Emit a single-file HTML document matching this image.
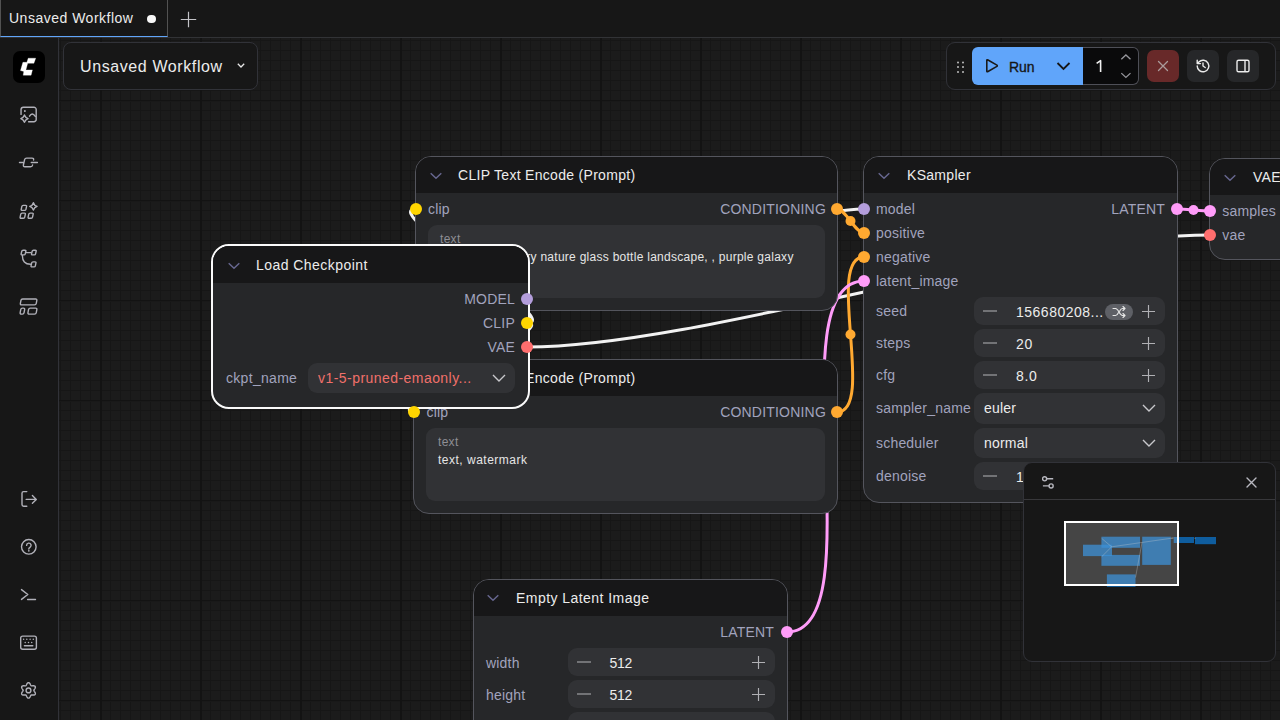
<!DOCTYPE html>
<html><head><meta charset="utf-8">
<style>
*{box-sizing:border-box;margin:0;padding:0}
html,body{width:1280px;height:720px;overflow:hidden}
body{position:relative;background:#1b1b1b;font-family:"Liberation Sans",sans-serif;color:#e6e6e6}
.abs{position:absolute}
#grid{position:absolute;left:0;top:0;width:1280px;height:720px;
background-image:
 linear-gradient(to right,#131313 2px,transparent 2px),
 linear-gradient(to bottom,#131313 1px,#191919 1px,#191919 2px,transparent 2px),
 linear-gradient(to right,#161616 1px,transparent 1px),
 linear-gradient(to bottom,#161616 1px,transparent 1px);
background-size:100px 100px,100px 100px,10px 10px,10px 10px;}
#tabbar{left:0;top:0;width:1280px;height:38px;background:#171717;border-bottom:1px solid #323336}
#tab{left:0;top:0;width:168px;height:37px;border-left:1px solid #525252;border-right:1px solid #525252;border-bottom:1px solid #60a5fa}
#sidebar{left:0;top:38px;width:59px;height:682px;background:#171717;border-right:1px solid #313238}
svg{position:absolute}
#links{left:0;top:0}
.node{position:absolute;background:#262729;border:1px solid #54555d;border-radius:16px;overflow:hidden}
.hdr{position:absolute;left:0;top:0;right:0;height:36px;background:#171718}
.title{position:absolute;font-size:14px;letter-spacing:0.3px;color:#ececec;white-space:nowrap}
.chev{position:absolute}
.lbl{position:absolute;font-size:14px;color:#a1a3bd;white-space:nowrap;letter-spacing:0.2px}
.dot{position:absolute;width:12px;height:12px;border-radius:50%}
.ta{position:absolute;background:#313235;border-radius:9px}
.ta .l{position:absolute;left:12px;font-size:12px;color:#8e8e94;letter-spacing:0.3px}
.ta .v{position:absolute;left:12px;font-size:12px;color:#e6e6e6;letter-spacing:0.3px;white-space:nowrap}
.wg{position:absolute;background:#313235;border-radius:9px}
.wv{position:absolute;font-size:14px;color:#ececec;white-space:nowrap;letter-spacing:0.2px}
</style></head><body>
<div id="grid"></div>

<!-- links -->
<svg id="links" width="1280" height="720" viewBox="0 0 1280 720">
 <g fill="none" stroke-width="3" stroke-linecap="round">
  <path d="M527,299 C614.2,299 776.8,209 864,209" stroke="#f2f2f2"/>
  <path d="M527,323 C566.8,323 376.2,209 416,209" stroke="#f2f2f2"/>
  <path d="M527,323 C563.0,323 378.0,412 414,412" stroke="#f2f2f2"/>
  <path d="M527,347 C700.0,347 1037.0,235 1210,235" stroke="#f2f2f2"/>
  <path d="M837,209 C846.0,209 855.0,233 864,233" stroke="#ffa931"/>
  <path d="M837,412 C876.3,412 824.7,257 864,257" stroke="#ffa931"/>
  <path d="M787,632 C876.8,632 774.2,281 864,281" stroke="#ff9cf9"/>
  <path d="M1177,209 C1185.3,209 1201.7,211 1210,211" stroke="#ff9cf9"/>
 </g>
 <circle cx="850.5" cy="221" r="5" fill="#ffa931"/>
 <circle cx="850.5" cy="334.5" r="5" fill="#ffa931"/>
 <circle cx="1193.5" cy="210" r="5" fill="#ff9cf9"/>
</svg>


<!-- CLIP top -->
<div class="node" style="left:415px;top:156px;width:423px;height:155px">
 <div class="hdr"></div>
 <svg class="chev" style="left:14px;top:15px" width="13" height="8" viewBox="0 0 13 8"><path d="M0.7,1.2 L6,6.3 L11.3,1.2" fill="none" stroke="#66668e" stroke-width="1.5"/></svg>
 <div class="title" style="left:42px;top:10px">CLIP Text Encode (Prompt)</div>
 <div class="lbl" style="left:12px;top:44px">clip</div>
 <div class="lbl" style="right:11px;top:44px">CONDITIONING</div>
 <div class="ta" style="left:12px;top:68px;width:397px;height:73px">
  <div class="l" style="top:7px">text</div>
  <div class="v" style="top:25px;left:13.5px;letter-spacing:0.27px">beautiful scenery nature glass bottle landscape, , purple galaxy</div>
 </div>
</div>
<!-- CLIP bottom -->
<div class="node" style="left:413px;top:359px;width:425px;height:155px">
 <div class="hdr"></div>
 <svg class="chev" style="left:16px;top:15px" width="13" height="8" viewBox="0 0 13 8"><path d="M0.7,1.2 L6,6.3 L11.3,1.2" fill="none" stroke="#66668e" stroke-width="1.5"/></svg>
 <div class="title" style="left:44px;top:10px">CLIP Text Encode (Prompt)</div>
 <div class="lbl" style="left:12.5px;top:44px">clip</div>
 <div class="lbl" style="right:11px;top:44px">CONDITIONING</div>
 <div class="ta" style="left:12px;top:68px;width:399px;height:73px">
  <div class="l" style="top:7px">text</div>
  <div class="v" style="top:25px;letter-spacing:0.5px">text, watermark</div>
 </div>
</div>
<!-- KSampler -->
<div class="node" style="left:863px;top:156px;width:315px;height:347px">
 <div class="hdr"></div>
 <svg class="chev" style="left:14px;top:15px" width="13" height="8" viewBox="0 0 13 8"><path d="M0.7,1.2 L6,6.3 L11.3,1.2" fill="none" stroke="#66668e" stroke-width="1.5"/></svg>
 <div class="title" style="left:43px;top:10px">KSampler</div>
 <div class="lbl" style="left:12px;top:44px">model</div>
 <div class="lbl" style="left:12px;top:68px">positive</div>
 <div class="lbl" style="left:12px;top:92px">negative</div>
 <div class="lbl" style="left:12px;top:116px">latent_image</div>
 <div class="lbl" style="right:12px;top:44px">LATENT</div>
 <div class="lbl" style="left:12px;top:146px">seed</div>
 <div class="lbl" style="left:12px;top:178px">steps</div>
 <div class="lbl" style="left:12px;top:210px">cfg</div>
 <div class="lbl" style="left:12px;top:243px">sampler_name</div>
 <div class="lbl" style="left:12px;top:278px">scheduler</div>
 <div class="lbl" style="left:12px;top:311px">denoise</div>
 <div class="wg" style="left:110px;top:140px;width:191px;height:28px"><svg class="abs" style="left:8px;top:13px" width="16" height="2" viewBox="0 0 16 2"><path d="M1,1 H15" stroke="#b4b4b8" stroke-width="1.15"/></svg><div class="wv" style="left:42px;top:7px;letter-spacing:0.5px">156680208...</div><div class="abs" style="left:131px;top:7px;width:28px;height:15.5px;border-radius:8px;background:#5e6066"><svg class="abs" style="left:7px;top:1.5px" width="14" height="12" viewBox="0 0 14 12" fill="none" stroke="#e8e8e8" stroke-width="1.1" stroke-linecap="round" stroke-linejoin="round"><path d="M1,2.5 H3.5 C6.5,2.5 7.5,9.5 10.5,9.5 H13 M11,7.5 L13,9.5 L11,11.5 M1,9.5 H3.5 C5,9.5 5.7,8 6.3,6.8 M7.7,5.2 C8.3,4 9,2.5 10.5,2.5 H13 M11,0.5 L13,2.5 L11,4.5"/></svg></div><svg class="abs" style="right:9px;top:6.5px" width="15" height="15" viewBox="0 0 15 15"><path d="M7.5,1 V14 M1,7.5 H14" stroke="#b0b0b4" stroke-width="1.15"/></svg></div>
 <div class="wg" style="left:110px;top:172px;width:191px;height:28px"><svg class="abs" style="left:8px;top:13px" width="16" height="2" viewBox="0 0 16 2"><path d="M1,1 H15" stroke="#b4b4b8" stroke-width="1.15"/></svg><div class="wv" style="left:42px;top:7px;letter-spacing:0.8px">20</div><svg class="abs" style="right:9px;top:6.5px" width="15" height="15" viewBox="0 0 15 15"><path d="M7.5,1 V14 M1,7.5 H14" stroke="#b0b0b4" stroke-width="1.15"/></svg></div>
 <div class="wg" style="left:110px;top:204px;width:191px;height:28px"><svg class="abs" style="left:8px;top:13px" width="16" height="2" viewBox="0 0 16 2"><path d="M1,1 H15" stroke="#b4b4b8" stroke-width="1.15"/></svg><div class="wv" style="left:42px;top:7px;letter-spacing:0.6px">8.0</div><svg class="abs" style="right:9px;top:6.5px" width="15" height="15" viewBox="0 0 15 15"><path d="M7.5,1 V14 M1,7.5 H14" stroke="#b0b0b4" stroke-width="1.15"/></svg></div>
 <div class="wg" style="left:110px;top:236px;width:191px;height:31px"><div class="wv" style="left:10px;top:7px">euler</div><svg class="abs" style="right:9px;top:11px" width="14" height="8" viewBox="0 0 14 8"><path d="M1,1 L7,7 L13,1" fill="none" stroke="#c8c8cc" stroke-width="1.4"/></svg></div>
 <div class="wg" style="left:110px;top:271px;width:191px;height:30px"><div class="wv" style="left:10px;top:7px">normal</div><svg class="abs" style="right:9px;top:11px" width="14" height="8" viewBox="0 0 14 8"><path d="M1,1 L7,7 L13,1" fill="none" stroke="#c8c8cc" stroke-width="1.4"/></svg></div>
 <div class="wg" style="left:110px;top:305px;width:191px;height:28px"><svg class="abs" style="left:8px;top:13px" width="16" height="2" viewBox="0 0 16 2"><path d="M1,1 H15" stroke="#b4b4b8" stroke-width="1.15"/></svg><div class="wv" style="left:42px;top:7px">1.00</div><svg class="abs" style="right:9px;top:6.5px" width="15" height="15" viewBox="0 0 15 15"><path d="M7.5,1 V14 M1,7.5 H14" stroke="#b0b0b4" stroke-width="1.15"/></svg></div>
</div>
<!-- VAE Decode -->
<div class="node" style="left:1209px;top:158px;width:120px;height:102px">
 <div class="hdr"></div>
 <svg class="chev" style="left:14px;top:15px" width="13" height="8" viewBox="0 0 13 8"><path d="M0.7,1.2 L6,6.3 L11.3,1.2" fill="none" stroke="#66668e" stroke-width="1.5"/></svg>
 <div class="title" style="left:43px;top:10px">VAE Decode</div>
 <div class="lbl" style="left:12.3px;top:44px">samples</div>
 <div class="lbl" style="left:12.3px;top:68px">vae</div>
</div>
<!-- Empty Latent -->
<div class="node" style="left:473px;top:579px;width:315px;height:180px">
 <div class="hdr"></div>
 <svg class="chev" style="left:13px;top:14px" width="13" height="8" viewBox="0 0 13 8"><path d="M0.7,1.2 L6,6.3 L11.3,1.2" fill="none" stroke="#66668e" stroke-width="1.5"/></svg>
 <div class="title" style="left:42px;top:10px;letter-spacing:0.45px">Empty Latent Image</div>
 <div class="lbl" style="right:13px;top:44px">LATENT</div>
 <div class="lbl" style="left:12px;top:75px">width</div>
 <div class="lbl" style="left:12px;top:107px">height</div>
 <div class="wg" style="left:93.5px;top:68px;width:207px;height:28px"><svg class="abs" style="left:8px;top:13px" width="16" height="2" viewBox="0 0 16 2"><path d="M1,1 H15" stroke="#b4b4b8" stroke-width="1.15"/></svg><div class="wv" style="left:42px;top:7px;letter-spacing:-0.3px">512</div><svg class="abs" style="right:9px;top:6.5px" width="15" height="15" viewBox="0 0 15 15"><path d="M7.5,1 V14 M1,7.5 H14" stroke="#b0b0b4" stroke-width="1.15"/></svg></div>
 <div class="wg" style="left:93.5px;top:100px;width:207px;height:28px"><svg class="abs" style="left:8px;top:13px" width="16" height="2" viewBox="0 0 16 2"><path d="M1,1 H15" stroke="#b4b4b8" stroke-width="1.15"/></svg><div class="wv" style="left:42px;top:7px;letter-spacing:-0.3px">512</div><svg class="abs" style="right:9px;top:6.5px" width="15" height="15" viewBox="0 0 15 15"><path d="M7.5,1 V14 M1,7.5 H14" stroke="#b0b0b4" stroke-width="1.15"/></svg></div>
 <div class="wg" style="left:93.5px;top:132px;width:207px;height:28px"><svg class="abs" style="left:8px;top:13px" width="16" height="2" viewBox="0 0 16 2"><path d="M1,1 H15" stroke="#b4b4b8" stroke-width="1.15"/></svg><div class="wv" style="left:42px;top:7px">1</div><svg class="abs" style="right:9px;top:6.5px" width="15" height="15" viewBox="0 0 15 15"><path d="M7.5,1 V14 M1,7.5 H14" stroke="#b0b0b4" stroke-width="1.15"/></svg></div>
</div>
<!-- Load Checkpoint -->
<div class="node" style="left:211px;top:244px;width:319px;height:165px;border:2px solid #fafafa;border-radius:18px">
 <div class="hdr" style="height:37px"></div>
 <svg class="chev" style="left:15px;top:16px" width="13" height="8" viewBox="0 0 13 8"><path d="M0.7,1.2 L6,6.3 L11.3,1.2" fill="none" stroke="#66668e" stroke-width="1.5"/></svg>
 <div class="title" style="left:43px;top:11px;letter-spacing:0.45px">Load Checkpoint</div>
 <div class="lbl" style="right:13px;top:45px">MODEL</div>
 <div class="lbl" style="right:13px;top:69px">CLIP</div>
 <div class="lbl" style="right:13px;top:93px">VAE</div>
 <div class="lbl" style="left:13px;top:124px;letter-spacing:0.3px">ckpt_name</div>
 <div class="wg" style="left:95px;top:117px;width:207px;height:30px"><div class="wv" style="left:10px;top:7px;color:#f0706a;letter-spacing:0.45px">v1-5-pruned-emaonly...</div><svg class="abs" style="right:9px;top:11px" width="14" height="8" viewBox="0 0 14 8"><path d="M1,1 L7,7 L13,1" fill="none" stroke="#c8c8cc" stroke-width="1.4"/></svg></div>
</div>
<!-- dots -->
<div class="dot" style="left:410px;top:203px;background:#ffd500"></div>
<div class="dot" style="left:831px;top:203px;background:#ffa931"></div>
<div class="dot" style="left:408px;top:406px;background:#ffd500"></div>
<div class="dot" style="left:831px;top:406px;background:#ffa931"></div>
<div class="dot" style="left:858px;top:203px;background:#b39ddb"></div>
<div class="dot" style="left:858px;top:227px;background:#ffa931"></div>
<div class="dot" style="left:858px;top:251px;background:#ffa931"></div>
<div class="dot" style="left:858px;top:275px;background:#ff9cf9"></div>
<div class="dot" style="left:1171px;top:203px;background:#ff9cf9"></div>
<div class="dot" style="left:1204px;top:205px;background:#ff9cf9"></div>
<div class="dot" style="left:1204px;top:229px;background:#ff6e6e"></div>
<div class="dot" style="left:781px;top:626px;background:#ff9cf9"></div>
<div class="dot" style="left:521px;top:293px;background:#b39ddb"></div>
<div class="dot" style="left:521px;top:317px;background:#ffd500"></div>
<div class="dot" style="left:521px;top:341px;background:#ff6e6e"></div>

<!-- tab bar -->
<div id="tabbar" class="abs">
 <div id="tab" class="abs">
  <div class="abs" style="left:8px;top:10px;font-size:14px;letter-spacing:0.5px;color:#ececec;white-space:nowrap">Unsaved Workflow</div>
  <div class="abs" style="left:146.2px;top:14.6px;width:8.4px;height:8.4px;border-radius:50%;background:#f8f8f8"></div>
 </div>
 <svg class="abs" style="left:179.5px;top:10.6px" width="17" height="17" viewBox="0 0 17 17"><path d="M8.5,0.8 V16.2 M0.8,8.5 H16.2" stroke="#c4c4c8" stroke-width="1.2"/></svg>
</div>

<!-- sidebar -->
<div id="sidebar" class="abs"></div>


<!-- sidebar icons -->
<div class="abs" style="left:13px;top:51px;width:32px;height:32px;border-radius:7px;background:#000"></div>
<svg class="abs" style="left:13px;top:51px" width="32" height="32" viewBox="0 0 32 32"><path d="M15.2,7.2 L22.7,7.2 L20.9,12.3 L14.7,12.3 L12.9,18.9 L19.4,18.9 L18.1,24.2 L10.2,24.2 L10.8,20.4 L7.5,19.6 L9.9,11.3 L13.9,11.3 Z" fill="#fff" stroke="#fff" stroke-width="0.3" stroke-linejoin="round"/></svg>
<svg class="abs" style="left:0;top:90px" width="58" height="630" viewBox="0 90 58 630" fill="none" stroke="#b1b1b9" stroke-width="1.4" stroke-linecap="round" stroke-linejoin="round">
<path d="M21.05,114.4 V109.5 a2.3,2.3 0 0 1 2.3,-2.3 H33.9 a2.3,2.3 0 0 1 2.3,2.3 V119.4 a2.3,2.3 0 0 1 -2.3,2.3 H28.6"/>
<rect x="24" y="110.2" width="1.7" height="1.7" fill="#b1b1b9" stroke="none"/>
<path d="M24.45,115.0 Q25.349999999999998,117.69999999999999 28.05,118.6 Q25.349999999999998,119.5 24.45,122.19999999999999 Q23.55,119.5 20.849999999999998,118.6 Q23.55,117.69999999999999 24.45,115.0 Z"/>
<path d="M29.5,116.2 Q32.1,111.6 35.3,116.4"/>
<path d="M19.5,162.5 H22.9 M33.6,160 Q33.9,158.1 32,158.1 H26.6 Q25,158.1 24.6,159.6 L23.4,165 Q23.1,166.8 24.8,166.8 H30.6 Q32.3,166.8 32.6,165 M31.3,162.5 H37.4"/>
<path d="M21.86,206.47 Q22.10,205.40 23.20,205.40 L25.70,205.40 Q26.80,205.40 26.56,206.47 L25.94,209.33 Q25.70,210.40 24.60,210.40 L22.10,210.40 Q21.00,210.40 21.24,209.33 Z"/>
<path d="M20.77,214.18 Q21.00,213.10 22.10,213.10 L24.50,213.10 Q25.60,213.10 25.37,214.18 L24.73,217.22 Q24.50,218.30 23.40,218.30 L21.00,218.30 Q19.90,218.30 20.13,217.22 Z"/>
<path d="M28.77,214.18 Q29.00,213.10 30.10,213.10 L32.30,213.10 Q33.40,213.10 33.17,214.18 L32.53,217.22 Q32.30,218.30 31.20,218.30 L29.00,218.30 Q27.90,218.30 28.13,217.22 Z"/>
<path d="M33.4,202.70000000000002 Q34.199999999999996,205.6 37.1,206.4 Q34.199999999999996,207.20000000000002 33.4,210.1 Q32.6,207.20000000000002 29.7,206.4 Q32.6,205.6 33.4,202.70000000000002 Z"/>
<path d="M21.75,251.27 Q22.00,250.20 23.10,250.20 L25.00,250.20 Q26.10,250.20 25.85,251.27 L25.25,253.83 Q25.00,254.90 23.90,254.90 L22.00,254.90 Q20.90,254.90 21.15,253.83 Z"/>
<path d="M32.15,251.27 Q32.40,250.20 33.50,250.20 L35.30,250.20 Q36.40,250.20 36.15,251.27 L35.55,253.83 Q35.30,254.90 34.20,254.90 L32.40,254.90 Q31.30,254.90 31.55,253.83 Z"/>
<path d="M31.66,262.97 Q31.90,261.90 33.00,261.90 L35.10,261.90 Q36.20,261.90 35.96,262.97 L35.34,265.83 Q35.10,266.90 34.00,266.90 L31.90,266.90 Q30.80,266.90 31.04,265.83 Z"/>
<path d="M26.2,252.6 H30.9 M22.4,255.4 C22.3,261 25,264.3 30.5,264.3"/>
<path d="M20.93,300.47 Q21.20,299.00 22.70,299.00 L35.60,299.00 Q37.10,299.00 36.83,300.47 L36.27,303.43 Q36.00,304.90 34.50,304.90 L21.60,304.90 Q20.10,304.90 20.37,303.43 Z"/>
<path d="M20.73,309.58 Q21.00,308.10 22.50,308.10 L23.40,308.10 Q24.90,308.10 24.63,309.58 L24.07,312.62 Q23.80,314.10 22.30,314.10 L21.40,314.10 Q19.90,314.10 20.17,312.62 Z"/>
<path d="M28.53,309.58 Q28.80,308.10 30.30,308.10 L35.60,308.10 Q37.10,308.10 36.83,309.58 L36.27,312.62 Q36.00,314.10 34.50,314.10 L29.20,314.10 Q27.70,314.10 27.97,312.62 Z"/>
<path d="M26.8,491.6 H23.6 Q22,491.6 22,493.2 V504.6 Q22,506.2 23.6,506.2 H26.8 M26.2,499.4 H36.2 M32.4,495.6 L36.3,499.4 L32.4,503.2"/>
<circle cx="28.8" cy="546.8" r="7.3"/>
<path d="M26.6,545.4 a2.25,2.25 0 1 1 3.4,1.9 Q28.8,548 28.8,549.1"/>
<rect x="28.05" y="550.1" width="1.5" height="1.5" fill="#b1b1b9" stroke="none"/>
<path d="M21.5,589.6 L27.8,594.5 L21.5,599.4 M27.6,599.5 H35.5"/>
<rect x="20.7" y="636.1" width="15.7" height="13.1" rx="2"/>
<path d="M24.4,645.7 H32.8"/>
<path d="M23.6,639.2 h0.01 M26.8,639.2 h0.01 M30.1,639.2 h0.01 M33.3,639.2 h0.01 M25.2,642.5 h0.01 M28.5,642.5 h0.01 M31.7,642.5 h0.01" stroke-width="1.5"/>
<path d="M28.50,682.65 L28.90,682.72 L29.29,682.92 L29.63,683.23 L29.94,683.63 L30.20,684.07 L30.41,684.52 L30.59,684.94 L30.77,685.30 L30.96,685.58 L31.18,685.77 L31.45,685.86 L31.78,685.89 L32.18,685.86 L32.63,685.81 L33.13,685.77 L33.64,685.77 L34.14,685.83 L34.58,685.98 L34.95,686.21 L35.21,686.52 L35.35,686.91 L35.37,687.34 L35.27,687.80 L35.08,688.26 L34.83,688.70 L34.54,689.12 L34.27,689.49 L34.05,689.82 L33.90,690.12 L33.85,690.40 L33.90,690.68 L34.05,690.98 L34.27,691.31 L34.54,691.68 L34.83,692.10 L35.08,692.54 L35.27,693.00 L35.37,693.46 L35.35,693.89 L35.21,694.27 L34.95,694.59 L34.58,694.82 L34.14,694.97 L33.64,695.03 L33.13,695.03 L32.63,694.99 L32.18,694.94 L31.78,694.91 L31.45,694.94 L31.18,695.03 L30.96,695.22 L30.77,695.50 L30.59,695.86 L30.41,696.28 L30.20,696.73 L29.94,697.17 L29.63,697.57 L29.29,697.88 L28.90,698.08 L28.50,698.15 L28.10,698.08 L27.71,697.88 L27.37,697.57 L27.06,697.17 L26.80,696.73 L26.59,696.28 L26.41,695.86 L26.23,695.50 L26.04,695.22 L25.83,695.03 L25.55,694.94 L25.22,694.91 L24.82,694.94 L24.37,694.99 L23.87,695.03 L23.36,695.03 L22.86,694.97 L22.42,694.82 L22.05,694.59 L21.79,694.27 L21.65,693.89 L21.63,693.46 L21.73,693.00 L21.92,692.54 L22.17,692.10 L22.46,691.68 L22.73,691.31 L22.95,690.98 L23.10,690.68 L23.15,690.40 L23.10,690.12 L22.95,689.82 L22.73,689.49 L22.46,689.12 L22.17,688.70 L21.92,688.26 L21.73,687.80 L21.63,687.34 L21.65,686.91 L21.79,686.52 L22.05,686.21 L22.42,685.98 L22.86,685.83 L23.36,685.77 L23.87,685.77 L24.37,685.81 L24.82,685.86 L25.22,685.89 L25.55,685.86 L25.83,685.77 L26.04,685.58 L26.23,685.30 L26.41,684.94 L26.59,684.52 L26.80,684.07 L27.06,683.63 L27.37,683.23 L27.71,682.92 L28.10,682.72 Z"/>
<circle cx="28.5" cy="690.4" r="2.4"/>
</svg>

<!-- workflow dropdown -->
<div class="abs" style="left:63px;top:42px;width:195px;height:48px;background:#171717;border:1px solid #313238;border-radius:8px">
 <div class="abs" style="left:16px;top:15px;font-size:16px;letter-spacing:0.6px;color:#ececec;white-space:nowrap">Unsaved Workflow</div>
 <svg class="abs" style="left:172.5px;top:20px" width="8" height="5" viewBox="0 0 8 5"><path d="M0.8,0.8 L4,4 L7.2,0.8" fill="none" stroke="#e8e8e8" stroke-width="1.3"/></svg>
</div>

<!-- toolbar -->
<div class="abs" style="left:946px;top:42px;width:330px;height:48px;background:#171717;border:1px solid #313238;border-radius:9px"></div>
<svg class="abs" style="left:954px;top:58px" width="12" height="18" viewBox="0 0 12 18" fill="#bdbdbd">
 <circle cx="4" cy="4.5" r="1"/><circle cx="9" cy="4.5" r="1"/><circle cx="4" cy="9" r="1"/><circle cx="9" cy="9" r="1"/><circle cx="4" cy="14" r="1"/><circle cx="9" cy="14" r="1"/>
</svg>
<div class="abs" style="left:972px;top:47px;width:111px;height:38px;background:#60a5fa;border-radius:6px 0 0 6px">
 <svg class="abs" style="left:12px;top:11px" width="16" height="16" viewBox="0 0 16 16"><path d="M2.8,2.6 Q2.8,1.3 4,2 L12.9,7.1 Q13.7,7.75 12.9,8.4 L4,13.5 Q2.8,14.2 2.8,12.9 Z" fill="none" stroke="#1a1a1a" stroke-width="1.6" stroke-linejoin="round"/></svg>
 <div class="abs" style="left:37px;top:12px;font-size:14px;letter-spacing:-0.1px;color:#161616;white-space:nowrap;-webkit-text-stroke:0.35px #161616">Run</div>
 <svg class="abs" style="left:84px;top:14px" width="15" height="10" viewBox="0 0 15 10"><path d="M1.5,2 L7.5,8 L13.5,2" fill="none" stroke="#161616" stroke-width="1.8"/></svg>
</div>
<div class="abs" style="left:1083px;top:47px;width:56px;height:38px;background:#0a0a0b;border:1px solid #4e4f57;border-left:none;border-radius:0 6px 6px 0">
 <svg class="abs" style="left:1px;top:0" width="30" height="36" viewBox="1084 48 30 36"><path d="M1096.6,63.3 L1100.6,60.6 V72" fill="none" stroke="#f2f2f2" stroke-width="1.6" stroke-linejoin="round"/></svg>
 <svg class="abs" style="left:37px;top:5px" width="12" height="28" viewBox="0 0 12 28" fill="none" stroke="#96969c" stroke-width="1.3"><path d="M1.3,6.3 L5.9,2 L10.5,6.3 M1.3,20.1 L5.9,24.4 L10.5,20.1"/></svg>
</div>
<div class="abs" style="left:1147px;top:50px;width:32px;height:32px;background:#682929;border-radius:7px">
 <svg class="abs" style="left:10px;top:10px" width="12" height="12" viewBox="0 0 12 12"><path d="M1.5,1.5 L10.5,10.5 M10.5,1.5 L1.5,10.5" stroke="#aa9c9c" stroke-width="1.3" stroke-linecap="round"/></svg>
</div>
<div class="abs" style="left:1187px;top:50px;width:32px;height:32px;background:#262729;border-radius:7px">
 <svg class="abs" style="left:8px;top:8px" width="16" height="16" viewBox="0 0 16 16" fill="none" stroke="#ececec" stroke-width="1.4" stroke-linecap="round" stroke-linejoin="round"><path d="M2.2,8 A5.8,5.8 0 1 0 3.9,3.9 L2.2,5.6 M2.2,2.3 V5.6 H5.5 M8,5 V8 L10.2,9.5"/></svg>
</div>
<div class="abs" style="left:1227px;top:50px;width:32px;height:32px;background:#262729;border-radius:7px">
 <svg class="abs" style="left:8px;top:8px" width="16" height="16" viewBox="0 0 16 16" fill="none" stroke="#ececec" stroke-width="1.4" stroke-linejoin="round"><rect x="2" y="2.2" width="12" height="11.6" rx="1.6"/><path d="M10,2.2 V13.8"/></svg>
</div>

<!-- minimap -->
<div class="abs" style="left:1023px;top:462px;width:253px;height:200px;background:#171717;border:1px solid #313238;border-radius:9px;overflow:hidden">
 <div class="abs" style="left:0;top:36px;width:253px;height:1px;background:#38383b"></div>
 <svg class="abs" style="left:18px;top:13px" width="14" height="14" viewBox="0 0 14 14" fill="none" stroke="#b8b8c0" stroke-width="1.4"><path d="M4.7,2.8 H11.2 M0.9,9.9 H7"/><circle cx="2.6" cy="2.8" r="2.05"/><circle cx="9.1" cy="9.9" r="2.05"/></svg>
 <svg class="abs" style="left:221.6px;top:14px" width="11" height="11" viewBox="0 0 11 11"><path d="M1,1 L10,10 M10,1 L1,10" stroke="#b8b8c0" stroke-width="1.4" stroke-linecap="round"/></svg>
 <svg class="abs" style="left:-1px;top:-1px" width="253" height="200" viewBox="1023 462 253 200">
  <g fill="rgb(12,118,205)" fill-opacity="0.74">
   <rect x="1083" y="544.7" width="29" height="11.4"/>
   <rect x="1101.4" y="536.7" width="38.6" height="11.1"/>
   <rect x="1101.4" y="554.9" width="38.6" height="10.9"/>
   <rect x="1142.2" y="536.7" width="28.6" height="28.2"/>
   <rect x="1173.7" y="537" width="20.3" height="6"/>
   <rect x="1195" y="537" width="21" height="7.2"/>
   <rect x="1106.9" y="574.4" width="28.6" height="12.5"/>
  </g>
  <g stroke="#c8c8c8" stroke-opacity="0.45" stroke-width="0.7" fill="none">
   <path d="M1101.7,538.4 L1111.6,546.8 L1101.7,556.7 M1111.6,546.8 L1173,538 M1142,542.5 L1135.5,577.5 M1171,538.2 L1174,538 M1194,538.2 L1196,538.2"/>
  </g>
  <rect x="1065" y="522" width="113" height="63" fill="#ffffff" fill-opacity="0.2"/>
  <rect x="1065" y="522" width="113" height="63" fill="none" stroke="#ffffff" stroke-width="2"/>
 </svg>
</div>

</body></html>
